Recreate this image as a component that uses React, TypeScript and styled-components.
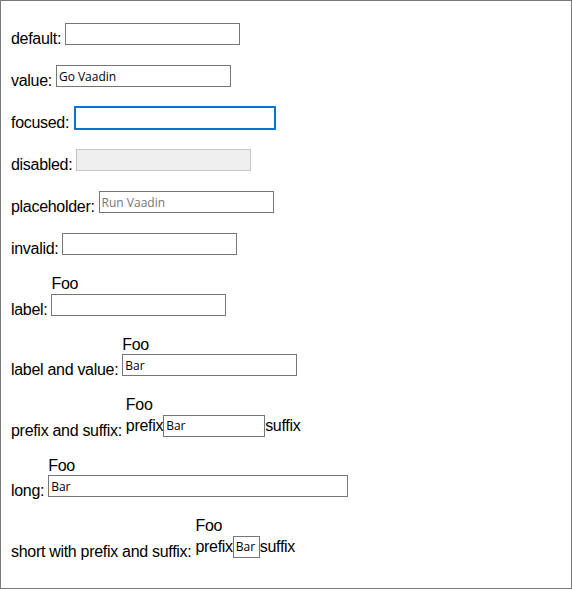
import React from "react";
import styled, { createGlobalStyle, css } from "styled-components";

const GlobalStyle = createGlobalStyle`
  html, body { margin: 0; padding: 0; background: #ffffff; }
`;

const Frame = styled.div`
  box-sizing: border-box;
  width: 572px;
  height: 589px;
  border: 1px solid #7a7a7a;
  padding: 22px 9px 0 10px;
  display: flex;
  flex-direction: column;
  align-items: flex-start;
  gap: 20px;
  font-family: "Liberation Sans", Arial, sans-serif;
  font-size: 16px;
  letter-spacing: -0.3px;
  color: #000000;
`;

const Row = styled.div`
  display: flex;
  align-items: flex-end;
  gap: 4px;
`;

const RowLabel = styled.span`
  line-height: normal;
  margin-bottom: -3px;
  white-space: pre;
`;

const Field = styled.div`
  display: inline-flex;
  flex-direction: column;
  align-items: flex-start;
`;

const FieldLabel = styled.span`
  line-height: 18.6px;
`;

const InputRow = styled.div`
  display: flex;
  align-items: center;
`;

const Affix = styled.span`
  line-height: normal;
`;

const Input = styled.input<{ $w: number; $focused?: boolean }>`
  box-sizing: border-box;
  width: ${(p) => p.$w}px;
  height: 22px;
  margin: 0;
  padding: 0 2px;
  border: 1px solid #767676;
  border-radius: 0;
  background: #ffffff;
  font-family: "Open Sans", "Noto Sans", sans-serif;
  font-size: 12px;
  letter-spacing: 0;
  color: #000000;
  outline: none;
  &::placeholder {
    color: #767676;
    opacity: 1;
  }
  &:disabled {
    background: #efefef;
    border-color: #c6c6c6;
  }
  ${(p) =>
    p.$focused &&
    css`
      border-color: #0a74d4;
      outline: 1px solid #0a74d4;
      margin-left: 2px;
    `}
`;

type FieldProps = {
  label?: string;
  value?: string;
  placeholder?: string;
  width?: number;
  prefix?: string;
  suffix?: string;
  focused?: boolean;
  disabled?: boolean;
};

function TextField({ label, value, placeholder, width = 175, prefix, suffix, focused, disabled }: FieldProps) {
  return (
    <Field>
      {label && <FieldLabel>{label}</FieldLabel>}
      <InputRow>
        {prefix && <Affix>{prefix}</Affix>}
        <Input
          $w={width}
          $focused={focused}
          defaultValue={value}
          placeholder={placeholder}
          disabled={disabled}
          readOnly
        />
        {suffix && <Affix>{suffix}</Affix>}
      </InputRow>
    </Field>
  );
}

const rows: { title: string; field: FieldProps }[] = [
  { title: "default:", field: {} },
  { title: "value:", field: { value: "Go Vaadin" } },
  { title: "focused:", field: { focused: true, width: 200 } },
  { title: "disabled:", field: { disabled: true } },
  { title: "placeholder:", field: { placeholder: "Run Vaadin" } },
  { title: "invalid:", field: {} },
  { title: "label:", field: { label: "Foo" } },
  { title: "label and value:", field: { label: "Foo", value: "Bar" } },
  { title: "prefix and suffix:", field: { label: "Foo", value: "Bar", prefix: "prefix", suffix: "suffix", width: 102 } },
  { title: "long:", field: { label: "Foo", value: "Bar", width: 300 } },
  { title: "short with prefix and suffix:", field: { label: "Foo", value: "Bar", prefix: "prefix", suffix: "suffix", width: 27 } },
];

export default function App() {
  return (
    <>
      <GlobalStyle />
      <Frame>
        {rows.map((r) => (
          <Row key={r.title}>
            <RowLabel>{r.title}</RowLabel>
            <TextField {...r.field} />
          </Row>
        ))}
      </Frame>
    </>
  );
}
